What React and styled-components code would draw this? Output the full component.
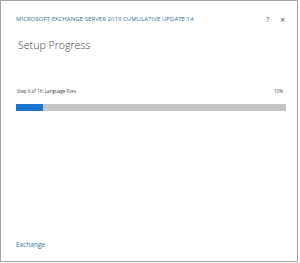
import React from 'react';
import styled, { createGlobalStyle } from 'styled-components';

const GlobalStyle = createGlobalStyle`
  html, body {
    margin: 0;
    padding: 0;
    background: #ffffff;
  }
`

const StyledWindow = styled.div`
  box-sizing: border-box;
  width: 298px;
  height: 262px;
  border: 1px solid #a3a3a3;
  background: #ffffff;
  display: flex;
  flex-direction: column;
  font-family: "Open Sans", "Liberation Sans", sans-serif;
`

const StyledTitleBar = styled.div`
  display: flex;
  align-items: center;
  height: 34px;
  padding: 0 0 0 15px;
`

const StyledTitle = styled.div`
  flex: 1;
  font-size: 6px;
  letter-spacing: 0.05px;
  text-transform: uppercase;
  color: #3b6f9a;
  padding-top: 2px;
`

const StyledTitleBtn = styled.div`
  width: 15px;
  text-align: center;
  font-size: ${props => props.size}px;
  color: #555;
  padding-top: 2px;
  margin-right: ${props => props.last ? 7 : 0}px;
`

const StyledHeading = styled.div`
  font-size: 10.6px;
  font-weight: 300;
  color: #454545;
  padding: 3px 0 0 17px;
  height: 20px;
`

const StyledStepRow = styled.div`
  display: flex;
  justify-content: space-between;
  margin-top: 30px;
  padding: 0 14px 0 16px;
  font-size: 4.6px;
  color: #444;
`

const StyledBar = styled.div`
  margin: 10px 11px 0 15px;
  height: 7px;
  background: #c6c6c6;
`

const StyledFill = styled.div`
  height: 100%;
  background: #1d74d0;
`

const StyledSpacer = styled.div`
  flex: 1;
`

const StyledFooter = styled.div`
  padding: 0 0 12px 15px;
  font-size: 6.6px;
  color: #2f74b5;
`

const App = () => {
  const percent = 10;
  return (
    <>
      <GlobalStyle />
      <StyledWindow>
        <StyledTitleBar>
          <StyledTitle>Microsoft Exchange Server 2019 Cumulative Update 14</StyledTitle>
          <StyledTitleBtn size={7}>?</StyledTitleBtn>
          <StyledTitleBtn size={9} last>×</StyledTitleBtn>
        </StyledTitleBar>
        <StyledHeading>Setup Progress</StyledHeading>
        <StyledStepRow>
          <span>Step 6 of 16: Language Files</span>
          <span>{percent}%</span>
        </StyledStepRow>
        <StyledBar>
          <StyledFill style={{ width: `${percent}%` }} />
        </StyledBar>
        <StyledSpacer />
        <StyledFooter>Exchange</StyledFooter>
      </StyledWindow>
    </>
  );
}

export default App;
